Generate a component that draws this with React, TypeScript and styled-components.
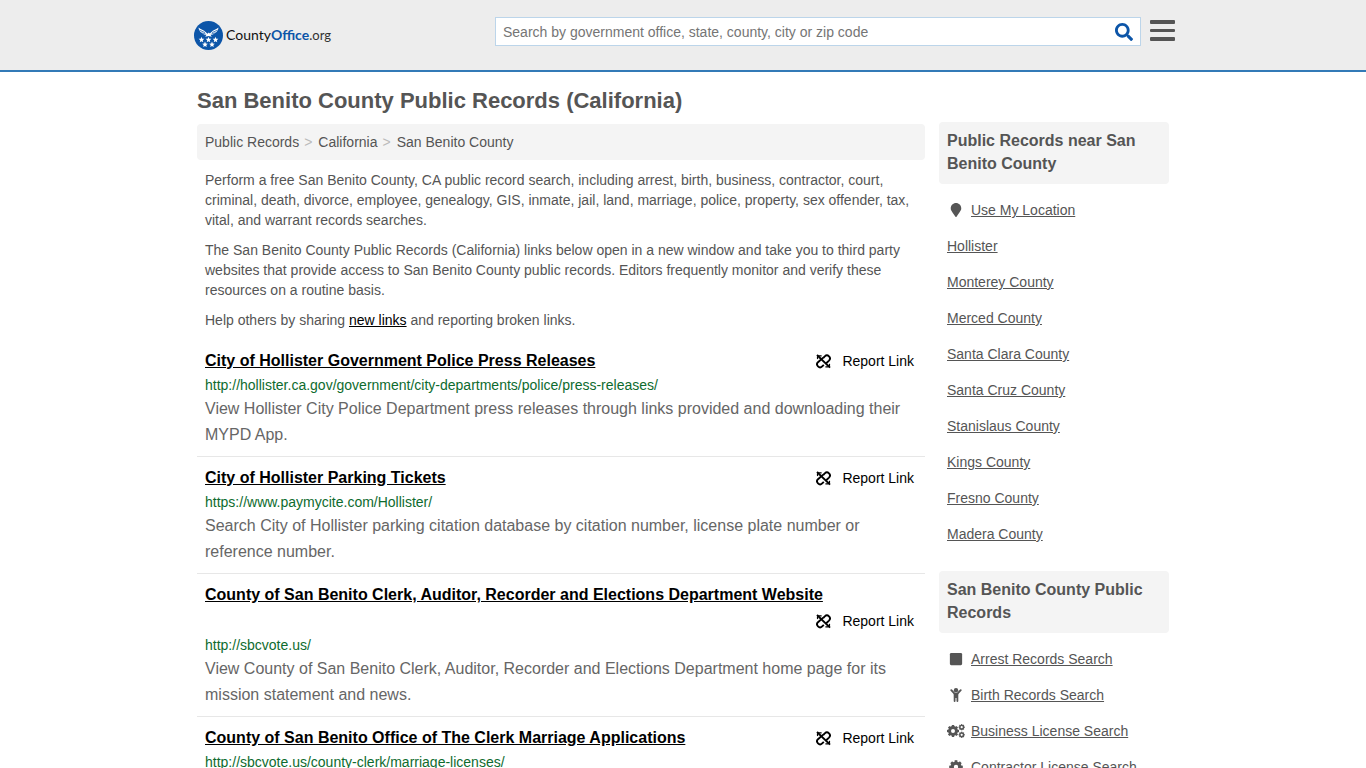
import React from "react";
import styled, { createGlobalStyle } from "styled-components";
import { FaSearch, FaMapMarker, FaSquare } from "react-icons/fa";

const GlobalStyle = createGlobalStyle`
  * { box-sizing: border-box; }
  body {
    margin: 0;
    background: #fff;
    color: #555;
    font-family: Arial, "Liberation Sans", sans-serif;
    font-size: 14px;
    line-height: 20px;
  }
`;

const Header = styled.header`
  background: #ededed;
  border-bottom: 2px solid #337ab7;
`;

const HeaderInner = styled.div`
  display: flex;
  align-items: flex-start;
  max-width: 984px;
  height: 70px;
  margin: 0 auto;
`;

const Logo = styled.a`
  display: flex;
  align-items: center;
  gap: 3px;
  margin: 20px auto 0 3px;
  color: #111;
  font-family: Lato, "Liberation Sans", sans-serif;
  font-size: 14px;
  line-height: 30px;
  text-decoration: none;

  strong { color: #0c55a8; font-weight: 700; }
  small { font-size: 13px; color: #333; font-weight: 400; }
`;

const SearchForm = styled.form`
  display: flex;
  flex: 0 1 646px;
  height: 29px;
  margin: 17px 9px 0 0;
  background: #fff;
  border: 1px solid #bcd5ea;
`;

const SearchInput = styled.input`
  flex: 1;
  min-width: 0;
  padding: 0 7px;
  border: 0;
  outline: 0;
  background: transparent;
  color: #555;
  font: inherit;

  &::placeholder { color: #757575; opacity: 1; }
`;

const IconButton = styled.button`
  display: flex;
  align-items: center;
  padding: 0;
  border: 0;
  background: transparent;
  color: #0c55a8;
  cursor: pointer;
`;

const SearchButton = styled(IconButton)`
  padding: 0 7px;
`;

const MenuButton = styled(IconButton)`
  margin-top: 20px;
  color: #555;
`;

const Page = styled.div`
  display: flex;
  align-items: flex-start;
  gap: 14px;
  max-width: 972px;
  margin: 0 auto;
`;

const Main = styled.main`
  flex: 1;
  min-width: 0;
`;

const PageTitle = styled.h1`
  margin: 17px 0 11px;
  font-size: 22px;
  line-height: 24px;
`;

const Breadcrumb = styled.nav`
  display: flex;
  padding: 8px;
  background: #f4f4f4;
  border-radius: 4px;

  a { color: #555; text-decoration: none; }
  a + a::before { content: ">"; padding: 0 6px 0 5px; color: #bbb; }
`;

const Intro = styled.div`
  padding: 10px 8px 0;

  p { margin: 0 0 10px; }
  a { color: #000; }
`;

const Results = styled.ul`
  margin: 0;
  padding: 0;
  list-style: none;
`;

const Result = styled.li`
  padding: 8px;

  & + & { border-top: 1px solid #e7e7e7; }
`;

const ResultHead = styled.div`
  display: flex;
  flex-wrap: wrap;
  line-height: 26px;
`;

const ResultTitle = styled.h2`
  margin: 0;
  font-size: 16px;

  a { color: #000; }
`;

const ReportLink = styled.a`
  display: flex;
  align-items: center;
  gap: 11px;
  margin-left: auto;
  padding: 0 3px 0 24px;
  color: #000;
  text-decoration: none;
`;

const ResultUrl = styled.div`
  color: #0e6b2e;
  line-height: 22px;
`;

const ResultText = styled.p`
  margin: 0;
  font-size: 16px;
  line-height: 26px;
  color: #666;
`;

const Sidebar = styled.aside`
  flex: 0 0 230px;
  padding-top: 50px;
`;

const SideTitle = styled.h2`
  margin: 0 0 8px;
  padding: 7px 8px 9px;
  background: #f4f4f4;
  border-radius: 4px;
  font-size: 16px;
  line-height: 23px;
`;

const SideList = styled.ul`
  margin: 0 0 19px;
  padding: 0 8px;
  list-style: none;
  line-height: 36px;

  li { display: flex; align-items: center; }
  a { color: #555; }
`;

const IconSlot = styled.span`
  display: flex;
  justify-content: center;
  width: 18px;
  margin-right: 6px;
`;

const starPoints = (cx: number, cy: number, r: number) =>
  Array.from({ length: 10 }, (_, i) => {
    const a = (Math.PI / 5) * i - Math.PI / 2;
    const d = i % 2 ? r * 0.45 : r;
    return `${(cx + d * Math.cos(a)).toFixed(2)},${(cy + d * Math.sin(a)).toFixed(2)}`;
  }).join(" ");

const stars = [[7.5, 18.8], [14.5, 18.8], [21.5, 18.8], [11, 23.6], [18, 23.6]];

const LogoMark = () => (
  <svg width="29" height="29" viewBox="0 0 29 29" aria-hidden="true">
    <circle cx="14.5" cy="14.5" r="14.5" fill="#0c55a8" />
    <path
      fill="#fff"
      d="M4.500 6.500C6.500 8.800 10 8.800 11.800 11.200L13.500 12.800L14.800 11.400L15.800 12.600L17.200 11.200C19 8.800 22.500 8.800 24.500 6.500C24.300 9 23 11 21.200 12C19.800 13.300 18 13.800 16.500 13.800L17.800 15.800L14.500 15L11.200 15.800L12.500 13.800C11 13.800 9.200 13.300 7.800 12C6 11 4.700 9 4.500 6.500Z"
    />
    <path stroke="#0c55a8" strokeWidth="0.7" fill="none" d="M5.500 9.200L11 11.600M7.500 11.800L11.500 12.900M23.500 9.200L18 11.600M21.500 11.800L17.500 12.900" />
    {stars.map(([x, y]) => (
      <polygon key={`${x}-${y}`} points={starPoints(x, y, 3)} fill="#fff" />
    ))}
  </svg>
);

const BrokenLinkIcon = () => (
  <svg width="15" height="15" viewBox="0 0 15 15" fill="none" stroke="currentColor" strokeWidth="1.900" aria-hidden="true">
    <path d="M1 1L14 13.600" />
    <path d="M7.200 4L8.800 2.400A2.900 2.900 0 0 1 13 6.600L10.200 9.200" />
    <path d="M7.800 10.800L6.200 12.400A2.900 2.900 0 0 1 2 8.200L7.200 3.600" />
    <path d="M5.600 1.900H3.200A2 2 0 0 0 1.800 5" strokeWidth="1.300" />
    <path d="M9.400 12.900H11.800A2 2 0 0 0 13.200 9.800" strokeWidth="1.300" />
  </svg>
);

const ChildIcon = () => (
  <svg width="12" height="14" viewBox="0 0 12 14" fill="currentColor" aria-hidden="true">
    <circle cx="6" cy="2.300" r="2.200" />
    <path d="M3.700 5H8.300V13.100A.9 .9 0 0 1 6.500 13.100V10H5.500V13.100A.9 .9 0 0 1 3.700 13.100Z" />
    <path d="M1.300 2.200L4.500 5.600H7.500L10.700 2.200" fill="none" stroke="currentColor" strokeWidth="1.900" strokeLinecap="round" strokeLinejoin="round" />
  </svg>
);

const Gear = ({ cx, cy, r, hole, teeth = 8 }: { cx: number; cy: number; r: number; hole: number; teeth?: number }) => (
  <g>
    <circle cx={cx} cy={cy} r={(r * 0.82 + hole) / 2} fill="none" stroke="currentColor" strokeWidth={r * 0.82 - hole} />
    {Array.from({ length: teeth }, (_, i) => (
      <rect
        key={i}
        x={cx - r * 0.2}
        y={cy - r}
        width={r * 0.4}
        height={r * 0.4}
        fill="currentColor"
        transform={`rotate(${(360 / teeth) * i} ${cx} ${cy})`}
      />
    ))}
  </g>
);

const GearIcon = () => (
  <svg width="14" height="14" viewBox="0 0 14 14" aria-hidden="true">
    <Gear cx={7} cy={7} r={6.8} hole={2.2} />
  </svg>
);

const GearsIcon = () => (
  <svg width="18" height="14" viewBox="0 0 18 14" aria-hidden="true">
    <Gear cx={6} cy={7} r={6} hole={2} />
    <Gear cx={14.7} cy={3.2} r={3.1} hole={1.1} teeth={8} />
    <Gear cx={14.7} cy={10.8} r={3.1} hole={1.1} teeth={8} />
  </svg>
);

const MarkerIcon = () => <FaMapMarker size={14} />;
const SquareIcon = () => <FaSquare size={14} />;

const results = [
  {
    title: "City of Hollister Government Police Press Releases",
    url: "http://hollister.ca.gov/government/city-departments/police/press-releases/",
    text: "View Hollister City Police Department press releases through links provided and downloading their MYPD App.",
  },
  {
    title: "City of Hollister Parking Tickets",
    url: "https://www.paymycite.com/Hollister/",
    text: "Search City of Hollister parking citation database by citation number, license plate number or reference number.",
  },
  {
    title: "County of San Benito Clerk, Auditor, Recorder and Elections Department Website",
    url: "http://sbcvote.us/",
    text: "View County of San Benito Clerk, Auditor, Recorder and Elections Department home page for its mission statement and news.",
  },
  {
    title: "County of San Benito Office of The Clerk Marriage Applications",
    url: "http://sbcvote.us/county-clerk/marriage-licenses/",
  },
];

const nearby = [
  "Hollister",
  "Monterey County",
  "Merced County",
  "Santa Clara County",
  "Santa Cruz County",
  "Stanislaus County",
  "Kings County",
  "Fresno County",
  "Madera County",
];

const searches = [
  { label: "Arrest Records Search", Icon: SquareIcon },
  { label: "Birth Records Search", Icon: ChildIcon },
  { label: "Business License Search", Icon: GearsIcon },
  { label: "Contractor License Search", Icon: GearIcon },
];

export default function App() {
  return (
    <>
      <GlobalStyle />
      <Header>
        <HeaderInner>
          <Logo href="#">
            <LogoMark />
            <span>
              County<strong>Office</strong>
              <small>.org</small>
            </span>
          </Logo>
          <SearchForm role="search">
            <SearchInput
              type="text"
              aria-label="Search"
              placeholder="Search by government office, state, county, city or zip code"
            />
            <SearchButton type="button" aria-label="Submit search">
              <FaSearch size={18} />
            </SearchButton>
          </SearchForm>
          <MenuButton type="button" aria-label="Menu">
            <svg width="25" height="21" viewBox="0 0 25 21" fill="currentColor">
              <rect width="25" height="4" rx="1" />
              <rect y="9" width="25" height="3" rx="1" />
              <rect y="17" width="25" height="4" rx="1" />
            </svg>
          </MenuButton>
        </HeaderInner>
      </Header>
      <Page>
        <Main>
          <PageTitle>San Benito County Public Records (California)</PageTitle>
          <Breadcrumb aria-label="Breadcrumb">
            <a href="#">Public Records</a>
            <a href="#">California</a>
            <a href="#">San Benito County</a>
          </Breadcrumb>
          <Intro>
            <p>
              Perform a free San Benito County, CA public record search, including arrest, birth, business,
              contractor, court, criminal, death, divorce, employee, genealogy, GIS, inmate, jail, land,
              marriage, police, property, sex offender, tax, vital, and warrant records searches.
            </p>
            <p>
              The San Benito County Public Records (California) links below open in a new window and take you
              to third party websites that provide access to San Benito County public records. Editors
              frequently monitor and verify these resources on a routine basis.
            </p>
            <p>
              Help others by sharing <a href="#">new links</a> and reporting broken links.
            </p>
          </Intro>
          <Results>
            {results.map((r) => (
              <Result key={r.title}>
                <ResultHead>
                  <ResultTitle>
                    <a href="#">{r.title}</a>
                  </ResultTitle>
                  <ReportLink href="#">
                    <BrokenLinkIcon />
                    Report Link
                  </ReportLink>
                </ResultHead>
                <ResultUrl>{r.url}</ResultUrl>
                {r.text && <ResultText>{r.text}</ResultText>}
              </Result>
            ))}
          </Results>
        </Main>
        <Sidebar>
          <SideTitle>Public Records near San Benito County</SideTitle>
          <SideList>
            <li>
              <IconSlot>
                <MarkerIcon />
              </IconSlot>
              <a href="#">Use My Location</a>
            </li>
            {nearby.map((name) => (
              <li key={name}>
                <a href="#">{name}</a>
              </li>
            ))}
          </SideList>
          <SideTitle>San Benito County Public Records</SideTitle>
          <SideList>
            {searches.map(({ label, Icon }) => (
              <li key={label}>
                <IconSlot>
                  <Icon />
                </IconSlot>
                <a href="#">{label}</a>
              </li>
            ))}
          </SideList>
        </Sidebar>
      </Page>
    </>
  );
}
